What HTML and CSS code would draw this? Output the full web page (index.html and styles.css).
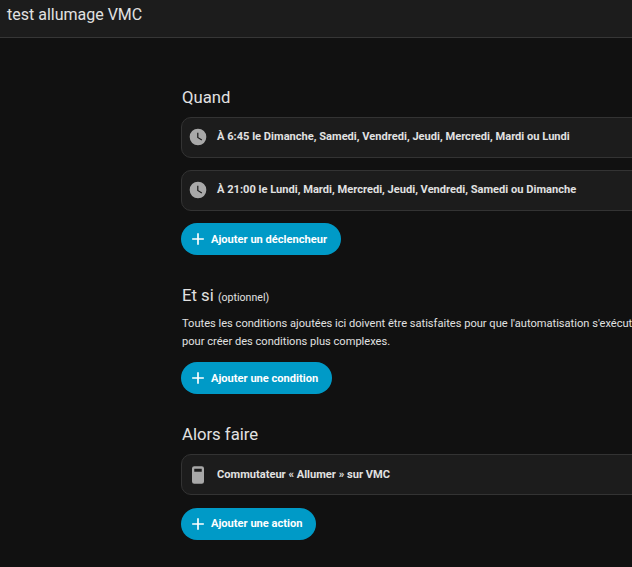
FILE: index.html
```html
<!DOCTYPE html>
<html lang="fr">
<head>
  <meta charset="UTF-8" />
  <meta name="viewport" content="width=device-width, initial-scale=1.0"/>
  <title>test allumage VMC</title>
  <link rel="stylesheet" href="styles.css">
</head>
<body>

  <header class="topbar">test allumage VMC</header>

  <main class="editor">

    <!-- Quand -->
    <section class="block">
      <h2>Quand</h2>
      <div class="row">
        <svg class="row-icon" viewBox="0 0 24 24"><path d="M12 2a10 10 0 1 0 0 20 10 10 0 0 0 0-20zm4.200 14.200L11 13V7h1.500v5.200l4.500 2.700-.8 1.300z"/></svg>
        <span class="row-text">À 6:45 le Dimanche, Samedi, Vendredi, Jeudi, Mercredi, Mardi ou Lundi</span>
      </div>
      <div class="row">
        <svg class="row-icon" viewBox="0 0 24 24"><path d="M12 2a10 10 0 1 0 0 20 10 10 0 0 0 0-20zm4.200 14.200L11 13V7h1.500v5.200l4.500 2.700-.8 1.300z"/></svg>
        <span class="row-text">À 21:00 le Lundi, Mardi, Mercredi, Jeudi, Vendredi, Samedi ou Dimanche</span>
      </div>
      <button class="add-btn">
        <svg class="plus" viewBox="0 0 24 24"><path d="M19 13h-6v6h-2v-6H5v-2h6V5h2v6h6v2z"/></svg>
        Ajouter un déclencheur
      </button>
    </section>

    <!-- Et si -->
    <section class="block">
      <h2>Et si <small>(optionnel)</small></h2>
      <p class="desc">Toutes les conditions ajoutées ici doivent être satisfaites pour que l'automatisation s'exécute.<br>pour créer des conditions plus complexes.</p>
      <button class="add-btn">
        <svg class="plus" viewBox="0 0 24 24"><path d="M19 13h-6v6h-2v-6H5v-2h6V5h2v6h6v2z"/></svg>
        Ajouter une condition
      </button>
    </section>

    <!-- Alors faire -->
    <section class="block">
      <h2>Alors faire</h2>
      <div class="row row-action">
        <svg class="row-icon" viewBox="0 0 24 24"><path fill-rule="evenodd" d="M7.500 1.500h9A2.700 2.700 0 0 1 19.200 4.200v15.600a2.700 2.700 0 0 1-2.700 2.700h-9a2.700 2.700 0 0 1-2.700-2.700V4.200A2.700 2.700 0 0 1 7.500 1.500zM7.500 4.500v3.500h9V4.500h-9z"/></svg>
        <span class="row-text">Commutateur « Allumer » sur VMC</span>
      </div>
      <button class="add-btn">
        <svg class="plus" viewBox="0 0 24 24"><path d="M19 13h-6v6h-2v-6H5v-2h6V5h2v6h6v2z"/></svg>
        Ajouter une action
      </button>
    </section>

  </main>

</body>
</html>
```

FILE: styles.css
```css
html, body {
  height: 100%;
}

body {
  margin: 0;
  overflow: hidden;
  background-color: #111111;
  color: #e1e1e1;
  font-family: Roboto, sans-serif;
}

.topbar {
  box-sizing: border-box;
  height: 38px;
  padding: 4px 7px 0;
  background-color: #1c1c1c;
  border-bottom: 1px solid #363636;
  font-size: 16px;
  line-height: 21px;
}

.editor {
  width: 700px;
  margin-left: 181px;
  padding-top: 47px;
}

.block {
  margin-bottom: 28px;
}

h2 {
  height: 24px;
  margin: 0;
  padding-left: 1px;
  font-size: 16.700px;
  font-weight: 400;
  line-height: 26px;
}

h2 small {
  font-size: 10.600px;
  line-height: 1;
}

.row {
  box-sizing: border-box;
  display: flex;
  align-items: center;
  height: 40.500px;
  margin-top: 12.500px;
  padding-left: 6px;
  background-color: #1c1c1c;
  border: 1px solid #333333;
  border-radius: 10px;
  font-size: 11.100px;
  font-weight: 700;
}

h2 + .row {
  margin-top: 8px;
}

.row-action {
  height: 41px;
  margin-bottom: 0.500px;
}

.row-icon {
  flex-shrink: 0;
  width: 20px;
  height: 20px;
  margin-right: 9px;
  fill: #a8a8a8;
}

.row-text {
  padding-bottom: 2px;
}

.row-action .row-text {
  padding-bottom: 0;
}

.desc {
  margin: 8px 0 0;
  padding-left: 1px;
  font-size: 11.100px;
  line-height: 18px;
  white-space: nowrap;
}

.add-btn {
  display: flex;
  align-items: center;
  height: 32px;
  margin-top: 12.500px;
  padding: 0 14px 0 7px;
  background-color: #009ac7;
  border: 0;
  border-radius: 16px;
  color: #ffffff;
  font-family: Roboto, sans-serif;
  font-size: 11.100px;
  font-weight: 700;
}

.desc + .add-btn {
  margin-top: 11px;
}

.plus {
  width: 20px;
  height: 20px;
  margin-right: 3px;
  fill: #ffffff;
}
```
